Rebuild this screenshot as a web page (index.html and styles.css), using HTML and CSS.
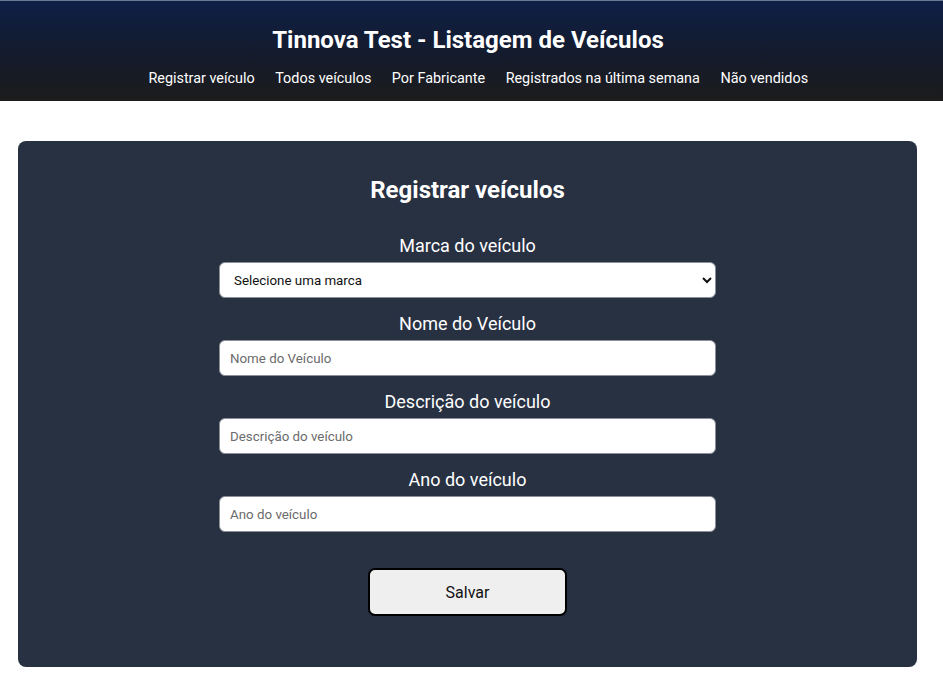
FILE: index.html
```html
<!DOCTYPE html>
<html lang="pt-BR">
<head>
<meta charset="utf-8">
<title>Tinnova Test - Listagem de Veículos</title>
<link rel="stylesheet" href="styles.css">
</head>
<body>
<header class="header">
  <h1 class="header-title">Tinnova Test - Listagem de Veículos</h1>
  <nav class="nav">
    <a class="nav-link" href="#">Registrar veículo</a>
    <a class="nav-link" href="#">Todos veículos</a>
    <a class="nav-link" href="#">Por Fabricante</a>
    <a class="nav-link" href="#">Registrados na última semana</a>
    <a class="nav-link" href="#">Não vendidos</a>
  </nav>
</header>
<main class="main">
  <section class="card">
    <h2 class="card-title">Registrar veículos</h2>
    <form class="form">
      <div class="field">
        <label class="label" for="marca">Marca do veículo</label>
        <select class="control select" id="marca">
          <option>Selecione uma marca</option>
        </select>
      </div>
      <div class="field">
        <label class="label" for="nome">Nome do Veículo</label>
        <input class="control" id="nome" type="text" placeholder="Nome do Veículo">
      </div>
      <div class="field">
        <label class="label" for="desc">Descrição do veículo</label>
        <input class="control" id="desc" type="text" placeholder="Descrição do veículo">
      </div>
      <div class="field">
        <label class="label" for="ano">Ano do veículo</label>
        <input class="control" id="ano" type="text" placeholder="Ano do veículo">
      </div>
      <button class="button" type="button">Salvar</button>
    </form>
  </section>
</main>
</body>
</html>
```
FILE: styles.css
```css
* { box-sizing: border-box; }
html, body { margin: 0; padding: 0; }
body {
  font-family: Roboto, "Liberation Sans", sans-serif;
  background: #ffffff;
  color: #ffffff;
}
.header {
  height: 101px;
  background: linear-gradient(to bottom, #0e1f46 0%, #141b2c 55%, #1c1c1c 100%);
  border-top: 1px solid #6b7a90;
  display: flex;
  flex-direction: column;
  align-items: center;
  padding: 25px 7px 0 0;
}
.header-title {
  margin: 0;
  font-size: 24px;
  font-weight: 700;
  line-height: 28px;
}
.nav {
  display: flex;
  margin-top: 16px;
}
.nav-link {
  color: #ffffff;
  text-decoration: none;
  font-size: 14.4px;
  line-height: 18px;
  margin-left: 20.5px;
}
.main {
  padding: 40px 26px 19px 18px;
}
.card {
  background: #283142;
  border-radius: 8px;
  height: 526px;
  display: flex;
  flex-direction: column;
  align-items: center;
  padding-top: 35px;
}
.card-title {
  margin: 0;
  font-size: 24px;
  font-weight: 700;
  line-height: 28px;
}
.form {
  margin-top: 31px;
  display: flex;
  flex-direction: column;
  align-items: center;
  width: 497px;
}
.field {
  display: flex;
  flex-direction: column;
  align-items: center;
  width: 100%;
  margin-bottom: 15px;
}
.label {
  font-size: 18px;
  line-height: 21px;
  margin-bottom: 6px;
}
.control {
  width: 100%;
  height: 36px;
  border: 1px solid #8a8f98;
  border-radius: 6px;
  background: #ffffff;
  font-family: Roboto, "Liberation Sans", sans-serif;
  font-size: 13.33px;
  color: #111111;
  padding: 0 10px;
}
.control::placeholder { color: #6b6b6b; }
.select {
  padding: 0 10px 0 10px;
  color: #111111;
}
.button {
  margin-top: 21px;
  width: 199px;
  height: 48px;
  border: 2px solid #000000;
  border-radius: 7px;
  background: #efefef;
  font-family: Roboto, "Liberation Sans", sans-serif;
  font-size: 16px;
  color: #111111;
}
```
